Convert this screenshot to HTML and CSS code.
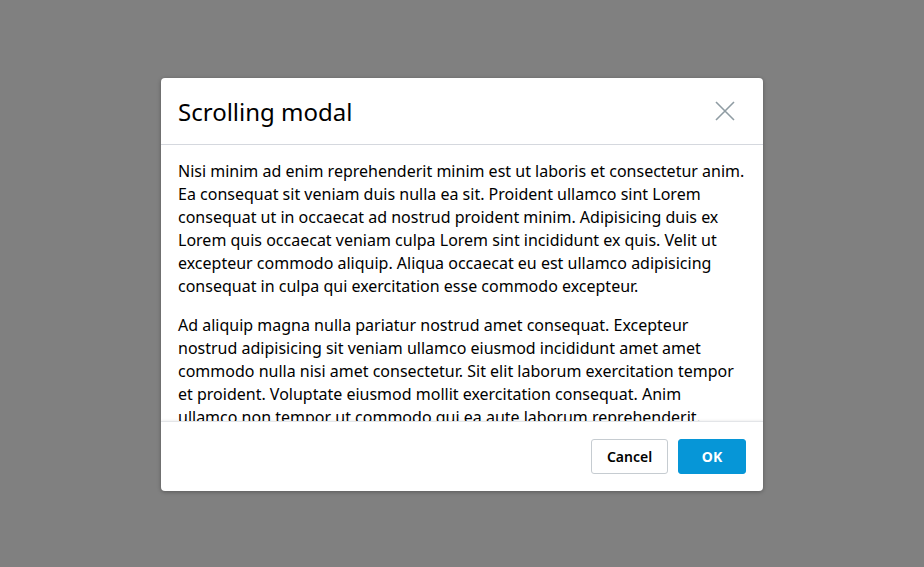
FILE: index.html
```html
<!DOCTYPE html>
<html>
<head>
<meta charset="utf-8">
<link rel="stylesheet" href="styles.css">
</head>
<body>
<div class="overlay">
  <div class="modal">
    <div class="modal-header">
      <h2 class="modal-title">Scrolling modal</h2>
      <button class="close" aria-label="Close">
        <svg width="20" height="20" viewBox="0 0 20 20"><path d="M1 1 L19 19 M19 1 L1 19" stroke="#8f9ca3" stroke-width="1.6" fill="none"/></svg>
      </button>
    </div>
    <div class="modal-body">
      <p>Nisi minim ad enim reprehenderit minim est ut laboris et consectetur anim. Ea consequat sit veniam duis nulla ea sit. Proident ullamco sint Lorem consequat ut in occaecat ad nostrud proident minim. Adipisicing duis ex Lorem quis occaecat veniam culpa Lorem sint incididunt ex quis. Velit ut excepteur commodo aliquip. Aliqua occaecat eu est ullamco adipisicing consequat in culpa qui exercitation esse commodo excepteur.</p>
      <p>Ad aliquip magna nulla pariatur nostrud amet consequat. Excepteur nostrud adipisicing sit veniam ullamco eiusmod incididunt amet amet commodo nulla nisi amet consectetur. Sit elit laborum exercitation tempor et proident. Voluptate eiusmod mollit exercitation consequat. Anim<br>ullamco non tempor ut commodo qui ea aute laborum reprehenderit. Cillum nisi irure aute consequat ea ad esse culpa nulla commodo sit.</p>
    </div>
    <div class="modal-footer">
      <button class="btn btn-secondary">Cancel</button>
      <button class="btn btn-primary">OK</button>
    </div>
  </div>
</div>
</body>
</html>
```
FILE: styles.css
```css
html, body {
  margin: 0;
  padding: 0;
  height: 100%;
}
body {
  background: #808080;
  font-family: "Noto Sans", "Open Sans", sans-serif;
  color: #000;
}
.overlay {
  height: 100%;
  display: flex;
  justify-content: center;
  padding-top: 78px;
  box-sizing: border-box;
}
.modal {
  width: 602px;
  height: 413px;
  background: #fff;
  border-radius: 4px;
  box-shadow: 0 1px 4px rgba(0,0,0,0.3);
  display: flex;
  flex-direction: column;
  overflow: hidden;
}
.modal-header {
  height: 66px;
  flex: none;
  display: flex;
  align-items: center;
  justify-content: space-between;
  padding: 0 28px 0 17px;
  border-bottom: 1px solid #d5d8de;
}
.modal-title {
  margin: 0;
  font-size: 24px;
  font-weight: 400;
}
.close {
  background: none;
  border: 0;
  padding: 0;
  width: 20px;
  height: 20px;
  cursor: pointer;
}
.modal-body {
  flex: 1;
  overflow: hidden;
  padding: 15px 17px 0 17px;
  font-size: 16px;
  line-height: 23px;
}
.modal-body p {
  margin: 0 0 16px;
}
.modal-footer {
  height: 70px;
  flex: none;
  box-sizing: border-box;
  border-top: 1px solid #e3e5e8;
  box-shadow: 0 -1px 2px rgba(0,0,0,0.06);
  display: flex;
  justify-content: flex-end;
  align-items: center;
  gap: 10px;
  padding: 0 17px;
}
.btn {
  height: 35px;
  border-radius: 3px;
  font-family: inherit;
  font-size: 14px;
  font-weight: 600;
  cursor: pointer;
}
.btn-secondary {
  width: 77px;
  background: #fff;
  border: 1px solid #c6ccd1;
  color: #000;
}
.btn-primary {
  width: 68px;
  background: #0696d7;
  border: 1px solid #0696d7;
  color: #fff;
  font-weight: 700;
}
```
